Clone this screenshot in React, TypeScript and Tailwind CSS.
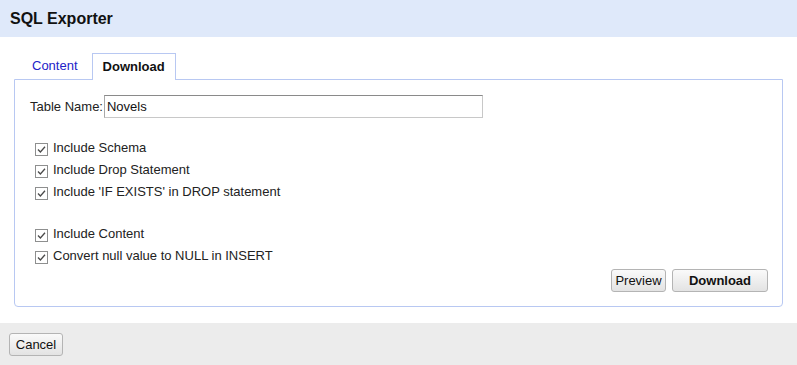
import React from "react";

const Check = () => (
  <svg width="13" height="13" viewBox="0 0 13 13" className="shrink-0">
    <rect x="0.5" y="0.5" width="12" height="12" fill="#fff" stroke="#8e8f8f" />
    <path d="M3 6.5 L5.4 9 L10 3.8" fill="none" stroke="#4a4a4a" strokeWidth="1.3" />
  </svg>
);

const Option = ({ label }: { label: string }) => (
  <label className="flex h-[22px] items-center gap-[5px]">
    <Check />
    <span className="relative -top-[1px]">{label}</span>
  </label>
);

const Btn = ({ children, className = "" }: { children: React.ReactNode; className?: string }) => (
  <button
    className={
      "h-[23px] rounded-[3px] border border-[#b4b4b4] bg-gradient-to-b from-[#fafafa] to-[#e3e3e3] text-[13px] text-[#111] " +
      className
    }
  >
    {children}
  </button>
);

export default function App() {
  return (
    <div className="w-[797px] h-[365px] bg-white text-[13px] text-[#222] font-['Liberation_Sans',Arial,sans-serif] flex flex-col">
      <div className="h-[37px] shrink-0 bg-[#dfe9fa] px-[10px] flex items-center">
        <h1 className="text-[16px] font-bold text-[#111]">SQL Exporter</h1>
      </div>

      <div className="px-[14px] pt-[16px]">
        <div className="flex items-end pl-[8px] gap-[4px] h-[26px]">
          <div className="h-[26px] px-[10px] flex items-center text-[#2323c8]">Content</div>
          <div className="relative z-10 -mb-px h-[27px] px-[10px] flex items-center border border-b-0 border-[#b8c8f2] bg-white font-bold text-[#111]">
            Download
          </div>
        </div>

        <div className="border border-[#b8c8f2] rounded-b-[4px] pl-[15px] pr-[14px] pt-[15px] pb-[14px]">
          <div className="flex items-center h-[23px]">
            <span>Table Name:</span>
            <input
              defaultValue="Novels"
              className="ml-[1px] w-[379px] h-[23px] border border-[#c8c8c8] border-t-[#8a8a8a] border-l-[#a8a8a8] px-[2px] text-[13px] text-[#111] outline-none"
            />
          </div>

          <div className="mt-[20px] pl-[5px]">
            <Option label="Include Schema" />
            <Option label="Include Drop Statement" />
            <Option label="Include 'IF EXISTS' in DROP statement" />
          </div>

          <div className="mt-[20px] pl-[5px]">
            <Option label="Include Content" />
            <Option label="Convert null value to NULL in INSERT" />
          </div>

          <div className="mt-[1px] flex justify-end gap-[6px]">
            <Btn className="w-[55px]">Preview</Btn>
            <Btn className="w-[96px] font-bold">Download</Btn>
          </div>
        </div>
      </div>

      <div className="mt-[16px] flex-1 bg-[#ececec] px-[9px] pt-[10px]">
        <Btn className="w-[54px] h-[22px]">Cancel</Btn>
      </div>
    </div>
  );
}
